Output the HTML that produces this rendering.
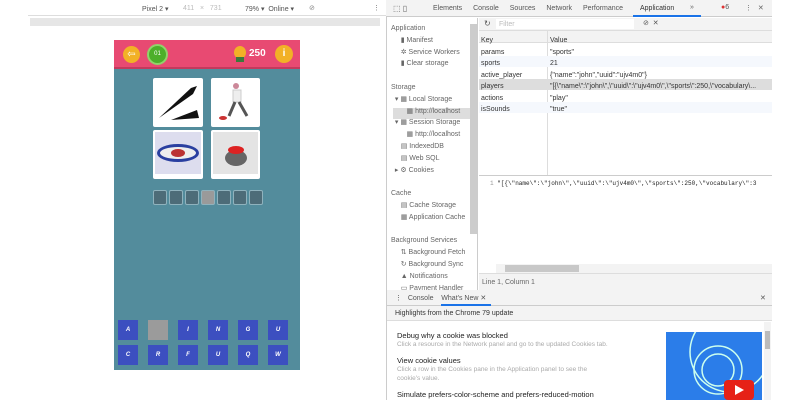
<!DOCTYPE html>
<html><head><style>
*{margin:0;padding:0;box-sizing:border-box}
body{width:800px;height:400px;background:#fff;font-family:"Liberation Sans",sans-serif;position:relative;overflow:hidden;font-size:7px;color:#333}
.a{position:absolute}
.t{white-space:nowrap}
</style></head><body>
<!-- device toolbar -->
<div class="a" style="left:28px;top:0;width:358px;height:16px;background:#fff;border-bottom:1px solid #ddd"></div>
<div class="a t" style="left:142px;top:5px;color:#555">Pixel 2 ▾</div>
<div class="a t" style="left:183px;top:5px;color:#bbb">411 &nbsp;&nbsp;× &nbsp;&nbsp;731</div>
<div class="a t" style="left:245px;top:5px;color:#555">79% ▾ &nbsp;Online ▾</div>
<div class="a t" style="left:309px;top:4px;color:#888">⊘</div>
<div class="a t" style="left:373px;top:4px;color:#777">⋮</div>
<div class="a" style="left:30px;top:18px;width:350px;height:8px;background:#e6e6e6"></div>
<div class="a" style="left:0;top:0;width:28px;height:400px;background:#fff"></div>
<!-- phone -->
<div class="a" style="left:114px;top:40px;width:186px;height:330px;background:#538c9c"></div>
<div class="a" style="left:114px;top:40px;width:186px;height:29px;background:#e84a72;border-bottom:2px solid #c23a5d"></div>
<div class="a" style="left:123px;top:46px;width:17px;height:17px;border-radius:50%;background:#f2b126;color:#fff;text-align:center;font-size:10px;line-height:17px">⇦</div>
<div class="a" style="left:147px;top:44px;width:21px;height:21px;border-radius:50%;background:#4caf2a;border:2px solid #8fd36a;color:#fff;text-align:center;font-size:6px;line-height:17px">01</div>
<div class="a" style="left:234px;top:46px;width:12px;height:13px;border-radius:50%;background:#f2b126"></div>
<div class="a" style="left:236px;top:57px;width:8px;height:5px;background:#3a7a3a"></div>
<div class="a t" style="left:249px;top:48px;color:#fff;font-weight:bold;font-size:10px">250</div>
<div class="a" style="left:275px;top:45px;width:18px;height:18px;border-radius:50%;background:#f2b126;color:#fff;text-align:center;font-size:10px;line-height:18px;font-weight:bold">i</div>
<!-- images -->
<div class="a" style="left:153px;top:78px;width:50px;height:49px;background:#fff;border-radius:2px"><svg width="50" height="49"><path d="M6 40 L38 10 L44 8 L40 16 Z" fill="#111"/><path d="M18 42 L44 32 L46 40 Z" fill="#111"/></svg></div>
<div class="a" style="left:211px;top:78px;width:49px;height:49px;background:#fff;border-radius:2px"><svg width="49" height="49"><circle cx="25" cy="8" r="3" fill="#c89"/><path d="M22 12 h8 v12 h-8z" fill="#eee" stroke="#ccc"/><path d="M24 24 L18 38 M28 24 L36 38" stroke="#555" stroke-width="3"/><ellipse cx="12" cy="40" rx="4" ry="2" fill="#c33"/></svg></div>
<div class="a" style="left:153px;top:130px;width:50px;height:49px;background:#fff;border-radius:2px"><div class="a" style="left:2px;top:2px;width:46px;height:42px;background:#dde"></div><div class="a" style="left:4px;top:14px;width:42px;height:18px;border-radius:50%;border:3px solid #2a3fa0;background:#eee"></div><div class="a" style="left:18px;top:19px;width:14px;height:8px;border-radius:50%;background:#b33"></div></div>
<div class="a" style="left:211px;top:130px;width:49px;height:49px;background:#fff;border-radius:2px"><div class="a" style="left:2px;top:2px;width:45px;height:42px;background:#e4e4e4"></div><div class="a" style="left:14px;top:20px;width:22px;height:16px;border-radius:50%;background:#666"></div><div class="a" style="left:17px;top:16px;width:16px;height:8px;border-radius:50%;background:#d22"></div></div>
<!-- answer boxes -->
<div class="a" style="display:flex;gap:2px;left:153px;top:190px">
<div style="width:14px;height:15px;background:#4d6c78;border:1px solid #8fb2bd;border-radius:2px"></div><div style="width:14px;height:15px;background:#4d6c78;border:1px solid #8fb2bd;border-radius:2px"></div><div style="width:14px;height:15px;background:#4d6c78;border:1px solid #8fb2bd;border-radius:2px"></div><div style="width:14px;height:15px;background:#9a9a9a;border:1px solid #8fb2bd;border-radius:2px"></div><div style="width:14px;height:15px;background:#4d6c78;border:1px solid #8fb2bd;border-radius:2px"></div><div style="width:14px;height:15px;background:#4d6c78;border:1px solid #8fb2bd;border-radius:2px"></div><div style="width:14px;height:15px;background:#4d6c78;border:1px solid #8fb2bd;border-radius:2px"></div></div>
<!-- letters -->
<div class="a" style="left:118px;top:320px;display:grid;grid-template-columns:repeat(6,20px);column-gap:10px;row-gap:5px;color:#fff;font-style:italic;font-weight:bold;font-size:6px;text-align:center;line-height:20px">
<div style="background:#3c4fc0">A</div><div style="background:#9b9b9b"></div><div style="background:#3c4fc0">I</div><div style="background:#3c4fc0">N</div><div style="background:#3c4fc0">G</div><div style="background:#3c4fc0">U</div>
<div style="background:#3c4fc0">C</div><div style="background:#3c4fc0">R</div><div style="background:#3c4fc0">F</div><div style="background:#3c4fc0">U</div><div style="background:#3c4fc0">Q</div><div style="background:#3c4fc0">W</div></div>
<!-- devtools -->
<div class="a" style="left:386px;top:0;width:386px;height:400px;background:#fff;border-left:1px solid #ccc"></div>
<div class="a" style="left:386px;top:0;width:386px;height:17px;background:#f3f3f3;border-bottom:1px solid #ccc"></div>
<div class="a t" style="left:393px;top:4px;color:#666;font-size:8px">⬚ ▯</div>
<div class="a t" style="left:433px;top:5px;color:#555;word-spacing:9px">Elements Console Sources Network Performance</div>
<div class="a t" style="left:640px;top:5px;color:#333">Application</div>
<div class="a" style="left:633px;top:15px;width:68px;height:2px;background:#1a73e8"></div>
<div class="a t" style="left:690px;top:4px;color:#666">»</div>
<div class="a t" style="left:721px;top:4px;color:#d33">●<span style="color:#555">6</span></div>
<div class="a t" style="left:745px;top:4px;color:#666">⋮ &nbsp;&nbsp;✕</div>
<!-- sidebar -->
<div class="a" style="left:387px;top:18px;width:91px;height:272px;background:#fff;border-right:1px solid #ccc"></div>
<div class="a" style="left:470px;top:24px;width:7px;height:210px;background:#ccc"></div>
<div class="a" style="left:393px;top:108px;width:77px;height:11px;background:#ddd"></div>
<div class="a t" style="left:391px;top:23px;color:#666;line-height:11.8px">Application<br>&nbsp;&nbsp;&nbsp;&nbsp;&nbsp;▮ Manifest<br>&nbsp;&nbsp;&nbsp;&nbsp;&nbsp;✲ Service Workers<br>&nbsp;&nbsp;&nbsp;&nbsp;&nbsp;▮ Clear storage<br><br>Storage<br>&nbsp;&nbsp;▾ ▦ Local Storage<br>&nbsp;&nbsp;&nbsp;&nbsp;&nbsp;&nbsp;&nbsp;&nbsp;▦ http://localhost<br>&nbsp;&nbsp;▾ ▦ Session Storage<br>&nbsp;&nbsp;&nbsp;&nbsp;&nbsp;&nbsp;&nbsp;&nbsp;▦ http://localhost<br>&nbsp;&nbsp;&nbsp;&nbsp;&nbsp;▤ IndexedDB<br>&nbsp;&nbsp;&nbsp;&nbsp;&nbsp;▤ Web SQL<br>&nbsp;&nbsp;▸ ⚙ Cookies<br><br>Cache<br>&nbsp;&nbsp;&nbsp;&nbsp;&nbsp;▤ Cache Storage<br>&nbsp;&nbsp;&nbsp;&nbsp;&nbsp;▦ Application Cache<br><br>Background Services<br>&nbsp;&nbsp;&nbsp;&nbsp;&nbsp;⇅ Background Fetch<br>&nbsp;&nbsp;&nbsp;&nbsp;&nbsp;↻ Background Sync<br>&nbsp;&nbsp;&nbsp;&nbsp;&nbsp;▲ Notifications<br>&nbsp;&nbsp;&nbsp;&nbsp;&nbsp;▭ Payment Handler</div>
<!-- main -->
<div class="a" style="left:479px;top:18px;width:293px;height:13px;background:#f3f3f3;border-bottom:1px solid #ddd"></div>
<div class="a t" style="left:484px;top:19px;color:#555;font-size:8px">↻</div>
<div class="a" style="left:496px;top:19px;width:138px;height:10px;background:#fff"></div>
<div class="a t" style="left:499px;top:21px;color:#bbb">Filter</div>
<div class="a t" style="left:643px;top:19px;color:#555">⊘ &nbsp;✕</div>
<div class="a" style="left:479px;top:31px;width:293px;height:12px;background:#f3f3f3;border-bottom:1px solid #ddd"></div>
<div class="a" style="left:547px;top:31px;width:1px;height:144px;background:#ddd"></div>
<div class="a" style="left:479px;top:79px;width:293px;height:11px;background:#ddd"></div>
<div class="a" style="left:479px;top:56px;width:293px;height:11px;background:#f5f8fd"></div>
<div class="a" style="left:479px;top:102px;width:293px;height:11px;background:#f5f8fd"></div>
<div class="a t" style="left:481px;top:35px;line-height:11.5px;color:#333">Key<br>params<br>sports<br>active_player<br>players<br>actions<br>isSounds</div>
<div class="a t" style="left:550px;top:35px;line-height:11.5px;color:#333">Value<br>"sports"<br>21<br>{"name":"john","uuid":"ujv4m0"}<br>"[{\"name\":\"john\",\"uuid\":\"ujv4m0\",\"sports\":250,\"vocabulary\...<br>"play"<br>"true"</div>
<div class="a" style="left:479px;top:175px;width:293px;height:1px;background:#ccc"></div>
<div class="a t" style="left:490px;top:180px;font-family:'Liberation Mono',monospace;font-size:6px;color:#222"><span style="color:#999">1 </span> "[{\"name\":\"john\",\"uuid\":\"ujv4m0\",\"sports\":250,\"vocabulary\":3</div>
<div class="a" style="left:496px;top:264px;width:276px;height:9px;background:#f3f3f3"></div>
<div class="a" style="left:505px;top:265px;width:74px;height:7px;background:#c8c8c8"></div>
<div class="a" style="left:479px;top:273px;width:293px;height:17px;background:#f3f3f3;border-top:1px solid #ddd"></div>
<div class="a t" style="left:482px;top:279px;color:#666">Line 1, Column 1</div>
<!-- drawer -->
<div class="a" style="left:387px;top:290px;width:385px;height:16px;background:#f3f3f3;border-bottom:1px solid #ccc"></div>
<div class="a t" style="left:395px;top:294px;color:#555">⋮ &nbsp;&nbsp;Console &nbsp;&nbsp;&nbsp;What's New ✕</div>
<div class="a" style="left:441px;top:304px;width:50px;height:2px;background:#1a73e8"></div>
<div class="a t" style="left:760px;top:294px;color:#555">✕</div>
<div class="a" style="left:387px;top:306px;width:385px;height:15px;background:#f3f3f3;border-bottom:1px solid #ddd"></div>
<div class="a t" style="left:395px;top:310px;color:#333">Highlights from the Chrome 79 update</div>
<div class="a t" style="left:397px;top:332px;line-height:8px;font-size:7.5px;color:#222">Debug why a cookie was blocked<br><span style="color:#aaa;font-size:6.5px">Click a resource in the Network panel and go to the updated Cookies tab.</span><br><br>View cookie values<br><span style="color:#aaa;font-size:6.5px">Click a row in the Cookies pane in the Application panel to see the<br>cookie's value.</span><br><br>Simulate prefers-color-scheme and prefers-reduced-motion</div>
<div class="a" style="left:666px;top:332px;width:96px;height:68px;background:#2b7de9;overflow:hidden"><svg width="96" height="68"><circle cx="52" cy="38" r="24" fill="none" stroke="#cfe" stroke-width="1.5"/><circle cx="52" cy="38" r="16" fill="none" stroke="#cfe" stroke-width="1.5"/><circle cx="64" cy="20" r="40" fill="none" stroke="#cfe" stroke-width="1.5"/><rect x="58" y="48" width="30" height="20" rx="4" fill="#e62117"/><path d="M69 53 L78 58 L69 63Z" fill="#fff"/></svg></div>
<div class="a" style="left:764px;top:322px;width:7px;height:78px;background:#f3f3f3"></div>
<div class="a" style="left:765px;top:331px;width:5px;height:18px;background:#bbb"></div>
</body></html>
